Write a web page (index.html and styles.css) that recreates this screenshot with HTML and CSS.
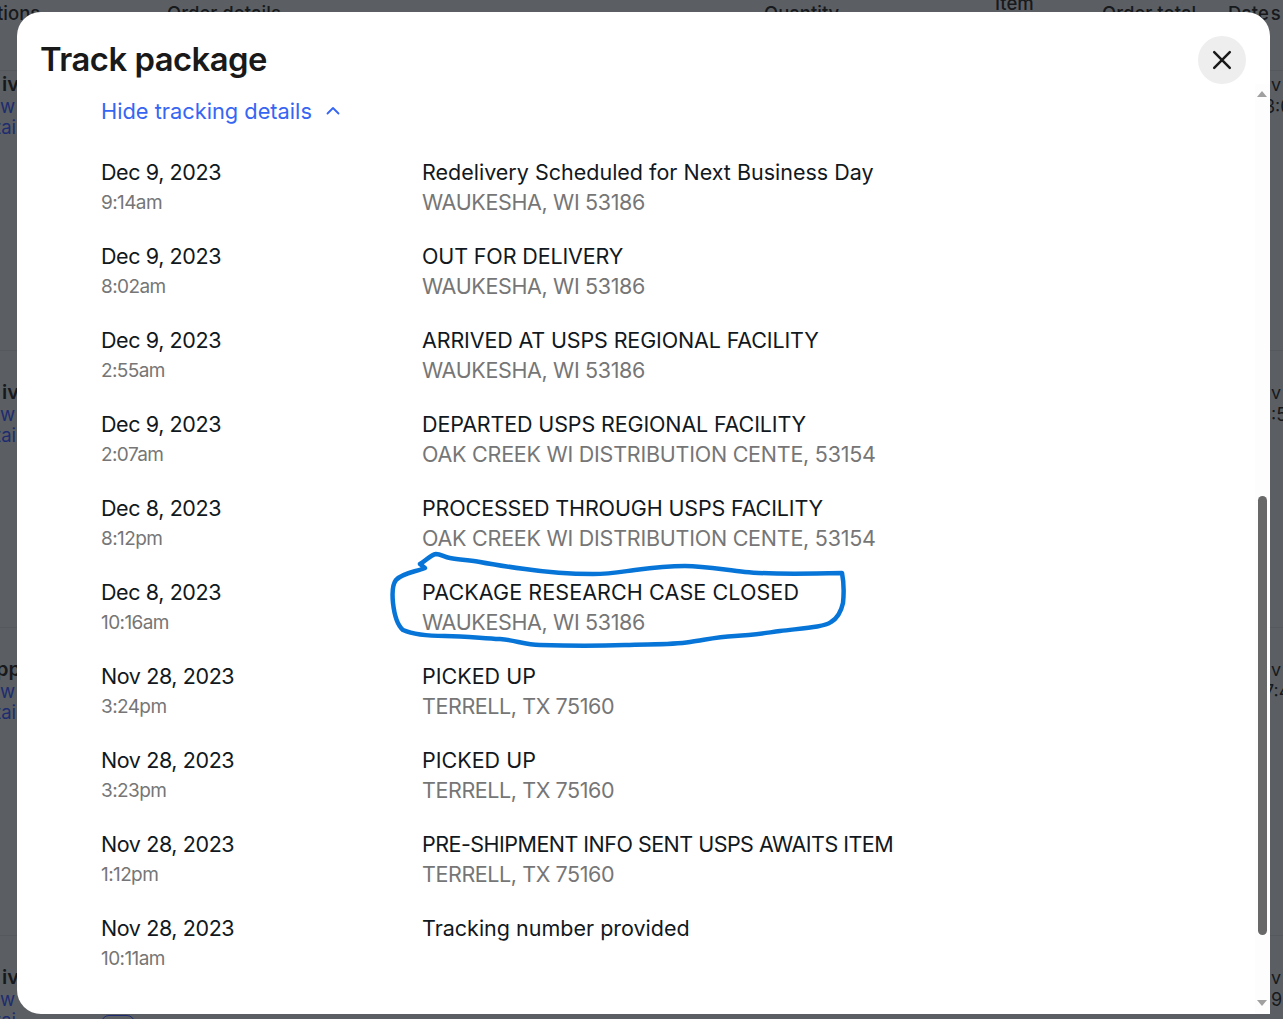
FILE: index.html
```html
<!DOCTYPE html>
<html lang="en">
<head>
<meta charset="utf-8">
<title>Track package</title>
<link rel="stylesheet" href="styles.css">
</head>
<body>
<div class="page">
  <div class="table-head">
    <span>tions</span><span>Order details</span><span>Quantity</span><span class="head-item">Item</span><span>Order total</span><span>Date s</span>
  </div>
  <div class="table-row row-a">
    <div class="cell-left"><b>iv</b><a>w</a><a>tai</a></div>
    <div class="cell-right"><span>v 3</span><span class="time-wide">3:0</span></div>
  </div>
  <div class="table-row row-b">
    <div class="cell-left"><b>iv</b><a>w</a><a>tai</a></div>
    <div class="cell-right"><span>v 3</span><span>:5</span></div>
  </div>
  <div class="table-row row-c">
    <div class="cell-left"><b>pp</b><a>w</a><a>tai</a></div>
    <div class="cell-right"><span>v 2</span><span class="time-wide">7:4</span></div>
  </div>
  <div class="table-row row-d">
    <div class="cell-left"><b>iv</b><a>w</a><a>tai</a></div>
    <div class="cell-right"><span>v 2</span><span>9:</span></div>
    <div class="row-button"><svg width="12" height="8" viewBox="0 0 12 8"><path d="M2 2l4 4 4-4" fill="none" stroke="#1e2c6f" stroke-width="2"/></svg></div>
  </div>
</div>

<section class="modal">
  <header class="modal-head">
    <h1>Track package</h1>
    <button class="close" aria-label="Close">
      <svg width="24" height="24" viewBox="0 0 24 24"><path d="M4.200 4.200l15.600 15.600M19.800 4.200L4.200 19.800" fill="none" stroke="#191919" stroke-width="2.500" stroke-linecap="round"/></svg>
    </button>
  </header>
  <div class="modal-body">
    <div class="content">
      <a class="toggle">Hide tracking details
        <svg width="16" height="16" viewBox="0 0 16 16"><path d="M2.500 10.500L8 5l5.500 5.500" fill="none" stroke="#3665f3" stroke-width="1.800" stroke-linecap="round" stroke-linejoin="round"/></svg>
      </a>
      <ul class="events">
        <li><div class="when"><p>Dec 9, 2023</p><small>9:14am</small></div><div class="what"><p>Redelivery Scheduled for Next Business Day</p><span class="loc-tight">WAUKESHA, WI 53186</span></div></li>
        <li><div class="when"><p>Dec 9, 2023</p><small>8:02am</small></div><div class="what"><p class="caps">OUT FOR DELIVERY</p><span class="loc-tight">WAUKESHA, WI 53186</span></div></li>
        <li><div class="when"><p>Dec 9, 2023</p><small>2:55am</small></div><div class="what"><p class="caps">ARRIVED AT USPS REGIONAL FACILITY</p><span class="loc-tight">WAUKESHA, WI 53186</span></div></li>
        <li><div class="when"><p>Dec 9, 2023</p><small>2:07am</small></div><div class="what"><p class="caps">DEPARTED USPS REGIONAL FACILITY</p><span>OAK CREEK WI DISTRIBUTION CENTE, 53154</span></div></li>
        <li><div class="when"><p>Dec 8, 2023</p><small>8:12pm</small></div><div class="what"><p class="caps">PROCESSED THROUGH USPS FACILITY</p><span>OAK CREEK WI DISTRIBUTION CENTE, 53154</span></div></li>
        <li><div class="when"><p>Dec 8, 2023</p><small>10:16am</small></div><div class="what"><p class="caps-wide">PACKAGE RESEARCH CASE CLOSED</p><span class="loc-tight">WAUKESHA, WI 53186</span></div></li>
        <li><div class="when"><p>Nov 28, 2023</p><small>3:24pm</small></div><div class="what"><p>PICKED UP</p><span class="loc-tighter">TERRELL, TX 75160</span></div></li>
        <li><div class="when"><p>Nov 28, 2023</p><small>3:23pm</small></div><div class="what"><p>PICKED UP</p><span class="loc-tighter">TERRELL, TX 75160</span></div></li>
        <li><div class="when"><p>Nov 28, 2023</p><small>1:12pm</small></div><div class="what"><p class="caps-tight">PRE-SHIPMENT INFO SENT USPS AWAITS ITEM</p><span class="loc-tighter">TERRELL, TX 75160</span></div></li>
        <li><div class="when"><p>Nov 28, 2023</p><small>10:11am</small></div><div class="what"><p>Tracking number provided</p></div></li>
      </ul>
    </div>
    <div class="scrollbar">
      <i class="arrow-up"></i>
      <div class="track"><div class="thumb"></div></div>
      <i class="arrow-down"></i>
    </div>
  </div>
</section>

<svg class="ink" width="1283" height="1019" viewBox="0 0 1283 1019">
  <path d="M420 564 C426 561 430 555 436 554 C441 554 444 557 450 558 C460 560 470 560 480 562 C495 565 510 567 525 569 C545 572 570 574 593 574 C610 574 620 572 635 570 C650 568 665 566 685 566 C705 566 725 570 745 572 C765 574 800 574 842 573 C844 583 844 593 843 603 C841 612 838 618 831 622 C824 627 805 628 780 631 C765 633 755 635 735 636 C715 637 705 640 690 642 C670 645 650 644 625 645 C600 646 570 646 540 645 C525 645 515 640 500 639 C480 638 465 636 445 636 C430 636 412 634 403 630 C396 624 394 612 393 603 C392 593 392 585 396 580 C402 573 415 572 425 568 L420 564" fill="none" stroke="#0775d8" stroke-width="4.500" stroke-linecap="round" stroke-linejoin="round"/>
</svg>
</body>
</html>
```

FILE: styles.css
```css
* { box-sizing: border-box; }
html, body { margin: 0; height: 100%; overflow: hidden; }
body {
  position: relative;
  width: 1283px;
  height: 1019px;
  background: #5b5f63;
  font-family: Inter, "Noto Sans", sans-serif;
  color: #191919;
}

/* Dimmed page behind the dialog */
.page { display: flex; flex-direction: column; color: #17191c; font-size: 18.500px; }
.table-head {
  display: grid;
  grid-template-columns: 167px 597px 231px 107px 126px 1fr;
  height: 71px;
  border-bottom: 1px solid #55585c;
  line-height: 22px;
  padding-top: 2px;
  font-weight: 500;
}
.table-head span:first-child { margin-left: -3px; }
.table-head span:last-child { word-spacing: -3px; white-space: nowrap; }
.head-item { margin-top: -10px; }
.table-row {
  position: relative;
  display: flex;
  justify-content: space-between;
  border-bottom: 1px solid #55585c;
}
.row-a { height: 280px; }
.row-b { height: 277px; }
.row-c { height: 308px; }
.row-d { height: 83px; border-bottom: 0; }
.cell-left, .cell-right { display: flex; flex-direction: column; padding-top: 31px; line-height: 21.500px; }
.row-a .cell-left, .row-a .cell-right { padding-top: 3px; }
.cell-left { margin-left: 2px; }
.cell-left b { font-weight: 600; font-size: 20px; }
.row-c b { margin-left: -6px; }
.cell-left a { color: #1e2c6f; margin-left: -2px; }
.cell-left a:last-child { margin-left: -7px; }
.cell-right { width: 12px; white-space: nowrap; font-size: 18px; word-spacing: -2px; }
.time-wide { margin-left: -7px; }
.row-button {
  position: absolute;
  left: 101px;
  top: 79px;
  width: 34px;
  height: 30px;
  border: 1px solid #1e2c6f;
  border-radius: 8px;
  text-align: center;
}

/* Dialog */
.modal {
  position: absolute;
  left: 17px;
  top: 12px;
  width: 1253px;
  height: 1002px;
  display: flex;
  flex-direction: column;
  background: #fff;
  border-radius: 24px 24px 0 24px;
}
.modal-head {
  height: 72px;
  flex: none;
  display: flex;
  align-items: center;
  justify-content: space-between;
  padding: 0 24px;
}
.modal-head h1 { margin: 22px 0 0 -1px; font-size: 32.800px; font-weight: 600; letter-spacing: -0.5px; line-height: 40px; color: #191919; }
.close {
  width: 48px;
  height: 48px;
  margin-top: 24px;
  padding: 0;
  border: 0;
  border-radius: 50%;
  background: #eeeeee;
  display: flex;
  align-items: center;
  justify-content: center;
}
.modal-body { flex: 1; min-height: 0; display: flex; }
.content { flex: 1; padding: 12px 0 0 84px; }
.toggle {
  display: flex;
  align-items: center;
  gap: 13px;
  height: 30px;
  font-size: 21.800px;
  color: #3665f3;
}
.events { list-style: none; margin: 31px 0 0; padding: 0; }
.events li { display: flex; height: 84px; line-height: 30px; font-size: 21.500px; color: #111820; }
.events p { margin: 0; }
.when { width: 321px; flex: none; }
.when p { letter-spacing: -0.4px; }
.when small { display: block; margin-top: 1px; font-size: 19px; letter-spacing: -0.6px; color: #767676; }
.what span { display: block; color: #767676; letter-spacing: -0.24px; }
.what .loc-tight { letter-spacing: -0.35px; }
.what .loc-tighter { letter-spacing: -0.42px; }
.caps { letter-spacing: -0.14px; }
.caps-wide { letter-spacing: 0.1px; }
.caps-tight { letter-spacing: -0.52px; }

/* Scrollbar */
.scrollbar { width: 15px; flex: none; display: flex; flex-direction: column; align-items: center; background: #fdfdfd; padding: 7px 0 8px; }
.track { flex: 1; width: 9px; margin: 8px 0; }
.thumb { width: 9px; height: 439px; margin-top: 391px; background: #686868; border-radius: 5px; }
.arrow-up, .arrow-down { width: 0; height: 0; border-left: 5px solid transparent; border-right: 5px solid transparent; margin-left: -1px; }
.arrow-up { border-bottom: 6px solid #a0a0a0; }
.arrow-down { border-top: 6px solid #a0a0a0; }

/* Hand-drawn annotation over the screenshot */
.ink { position: absolute; left: 0; top: 0; pointer-events: none; }
```
